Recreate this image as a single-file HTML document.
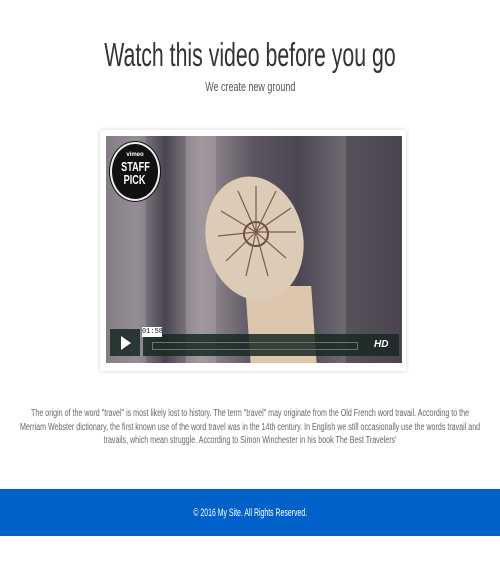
<!DOCTYPE html>
<html><head><meta charset="utf-8"><style>
body{margin:0;width:500px;height:580px;background:#fff;font-family:"Liberation Sans",sans-serif;overflow:hidden;position:relative}
.c{position:absolute;left:-250px;width:1000px;text-align:center;white-space:nowrap}
.sx{display:inline-block;transform-origin:center}
</style></head><body>
<div class="c" style="top:36px;font-size:33px;color:#333"><span class="sx" style="transform:scaleX(.645)">Watch this video before you go</span></div>
<div class="c" style="top:79px;font-size:13px;color:#555"><span class="sx" style="transform:scaleX(.69)">We create new ground</span></div>

<div style="position:absolute;left:100px;top:130px;width:306px;height:241px;background:#fff;box-shadow:0 0 4px rgba(0,0,0,.18)"></div>
<div style="position:absolute;left:106px;top:136px;width:296px;height:227px;overflow:hidden;background:linear-gradient(90deg,#6d6670 0%,#8e8790 10%,#4a4550 20%,#9a9298 32%,#5c5560 50%,#4b4652 65%,#6e6870 80%,#56505a 100%)">
  <div style="position:absolute;left:0;top:0;width:40px;height:227px;background:#9b949b;opacity:.5"></div>
  <div style="position:absolute;left:80px;top:0;width:30px;height:227px;background:#a8a0a4;opacity:.5"></div>
  <div style="position:absolute;left:240px;top:0;width:56px;height:227px;background:#3f3a44;opacity:.5"></div>
  <div style="position:absolute;left:142px;top:150px;width:66px;height:80px;background:#dcc6ae;transform:skewX(4deg)"></div>
  <div style="position:absolute;left:100px;top:40px;width:97px;height:125px;border-radius:50%;background:#dccbb6;transform:rotate(-12deg)"></div>
  <div style="position:absolute;left:137px;top:85px;width:22px;height:22px;border-radius:50%;border:2px solid #6a5040"></div>
  <svg style="position:absolute;left:0;top:0" width="296" height="227"><g stroke="#7a5c4a" stroke-width="1.2">
  <line x1="150" y1="96" x2="150" y2="50"/><line x1="150" y1="96" x2="170" y2="55"/><line x1="150" y1="96" x2="185" y2="72"/><line x1="150" y1="96" x2="190" y2="96"/><line x1="150" y1="96" x2="180" y2="122"/><line x1="150" y1="96" x2="162" y2="140"/><line x1="150" y1="96" x2="140" y2="140"/><line x1="150" y1="96" x2="120" y2="125"/><line x1="150" y1="96" x2="112" y2="100"/><line x1="150" y1="96" x2="115" y2="75"/><line x1="150" y1="96" x2="132" y2="55"/></g></svg>
  <div style="position:absolute;left:4px;top:6px;width:46px;height:55px;border-radius:50%;background:#111;border:2px solid #eee;box-shadow:0 0 0 1px #111;color:#fff;text-align:center;font-weight:bold;line-height:13px;font-size:13px">
    <div style="font-size:6px;line-height:10px;margin-top:6px">vimeo</div><span class="sx" style="transform:scaleX(.7)">STAFF</span><br><span class="sx" style="transform:scaleX(.7)">PICK</span></div>
  <div style="position:absolute;left:4px;top:193px;width:30px;height:27px;background:rgba(25,40,35,.85)"></div>
  <svg style="position:absolute;left:14px;top:200px" width="12" height="14"><path d="M1 0 L11 7 L1 14Z" fill="#fff"/></svg>
  <div style="position:absolute;left:37px;top:198px;width:256px;height:22px;background:rgba(25,40,35,.85)"></div>
  <div style="position:absolute;left:46px;top:206px;width:204px;height:6px;border:1px solid #6b7570"></div>
  <div style="position:absolute;left:268px;top:203px;color:#fff;font-weight:bold;font-style:italic;font-size:10px">HD</div>
  <div style="position:absolute;left:36px;top:191px;width:20px;height:10px;background:#fff;color:#222;font-size:7px;line-height:10px;font-family:'Liberation Mono',monospace;text-align:center">01:58</div>
</div>

<div class="c" style="top:407px;font-size:10px;line-height:13.5px;color:#666"><span class="sx" style="transform:scaleX(.71)">The origin of the word "travel" is most likely lost to history. The term "travel" may originate from the Old French word travail. According to the<br>Merriam Webster dictionary, the first known use of the word travel was in the 14th century. In English we still occasionally use the words travail and<br>travails, which mean struggle. According to Simon Winchester in his book The Best Travelers'</span></div>

<div style="position:absolute;left:0;top:489px;width:500px;height:47px;background:#0062c8"></div>
<div class="c" style="top:507px;font-size:11px;color:#fff"><span class="sx" style="transform:scaleX(.63)">© 2016 My Site. All Rights Reserved.</span></div>
</body></html>
